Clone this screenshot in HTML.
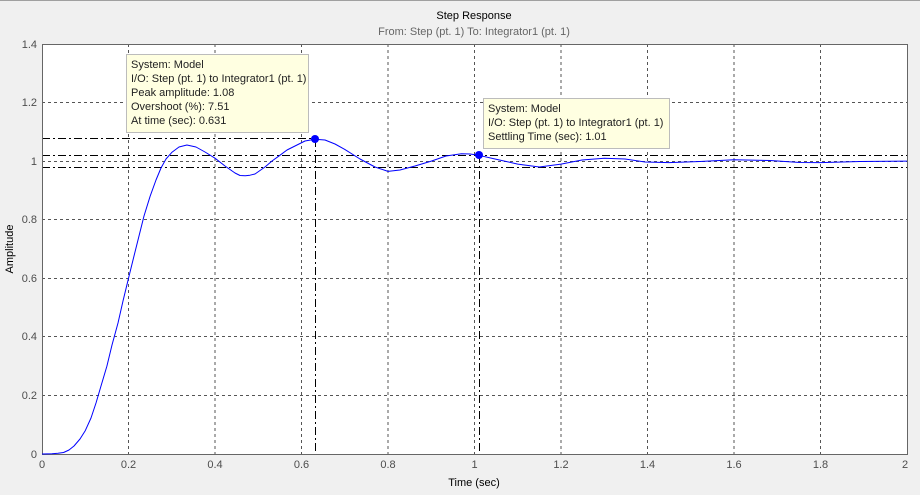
<!DOCTYPE html><html><head><style>body{margin:0;background:#f0f0f0;width:920px;height:495px;overflow:hidden;font-family:"Liberation Sans",sans-serif}
.tip{position:absolute;background:#ffffe1;border:1px solid #bcbcbc;font-size:11px;line-height:14px;padding:3px 4px;color:#222;white-space:nowrap}</style></head><body>
<svg width="920" height="495" style="position:absolute;left:0;top:0" font-family="Liberation Sans, sans-serif">
<line x1="0" y1="0.5" x2="920" y2="0.5" stroke="#a0a0a0"/>
<rect x="42" y="44" width="865" height="410" fill="#fff"/>
<g stroke="#555" stroke-width="1" stroke-dasharray="3,3">
<line x1="128.5" y1="44" x2="128.5" y2="454"/><line x1="215" y1="44" x2="215" y2="454"/><line x1="301.5" y1="44" x2="301.5" y2="454"/><line x1="388" y1="44" x2="388" y2="454"/><line x1="474.5" y1="44" x2="474.5" y2="454"/><line x1="561" y1="44" x2="561" y2="454"/><line x1="647.5" y1="44" x2="647.5" y2="454"/><line x1="734" y1="44" x2="734" y2="454"/><line x1="820.5" y1="44" x2="820.5" y2="454"/>
<line x1="42" y1="102.5" x2="907" y2="102.5"/><line x1="42" y1="161.5" x2="907" y2="161.5"/><line x1="42" y1="219.5" x2="907" y2="219.5"/><line x1="42" y1="278.5" x2="907" y2="278.5"/><line x1="42" y1="336.5" x2="907" y2="336.5"/><line x1="42" y1="395.5" x2="907" y2="395.5"/>
</g>
<g stroke="#000" stroke-width="1" stroke-dasharray="8,3,2,3">
<line x1="42" y1="138.5" x2="315" y2="138.5"/><line x1="315.5" y1="139" x2="315.5" y2="454"/>
<line x1="42" y1="155.5" x2="907" y2="155.5"/><line x1="42" y1="167.5" x2="907" y2="167.5"/><line x1="479.5" y1="155" x2="479.5" y2="454"/>
</g>
<rect x="42.5" y="44.5" width="865" height="410" fill="none" stroke="#666"/>
<polyline fill="none" stroke="#0000ff" stroke-width="1" stroke-linejoin="round" points="42,454 47,453.9 52,453.7 58,453.3 63.6,452.5 69,450 74,446 80,439 85.3,430.6 91,418 96,403 101,386 106.9,366.1 112,345 118,323 123,301 128.5,278.3 134,256 139,236 144,216 150.1,196.3 156,180 161,168 166,159 171.8,152.4 179,147 186.9,145 196,147 205,152 215,158.2 225,166 235,173 240,175.5 245.3,175.8 250,175.2 255,174 265,167 272,161 279.9,155.3 287,150 295,146 305,141 314.9,139.2 325,140 335,144 344.8,149.4 360,159 375,167 388,171.4 400,170 415,166 431.3,161.1 446,156 461.5,153.8 470,154 478.8,155.3 495,159 517.8,164.1 539.4,167 561,164.1 582,160 604.3,158.2 625,159 645,162 669.1,162.6 700,161.5 734,159.7 770,160.5 800,162.5 820.5,162.6 860,161.5 907,161.1"/>
<circle cx="315" cy="139" r="4" fill="#0000ff"/><circle cx="479" cy="155" r="4" fill="#0000ff"/>
<g font-size="11" fill="#4d4d4d" text-anchor="end">
<text x="37" y="48">1.4</text><text x="37" y="106">1.2</text><text x="37" y="165">1</text><text x="37" y="223">0.8</text><text x="37" y="282">0.6</text><text x="37" y="340">0.4</text><text x="37" y="399">0.2</text><text x="37" y="458">0</text></g>
<g font-size="11" fill="#4d4d4d" text-anchor="middle">
<text x="42" y="468">0</text><text x="128.5" y="468">0.2</text><text x="215" y="468">0.4</text><text x="301.5" y="468">0.6</text><text x="388" y="468">0.8</text><text x="474.5" y="468">1</text><text x="561" y="468">1.2</text><text x="647.5" y="468">1.4</text><text x="734" y="468">1.6</text><text x="820.5" y="468">1.8</text><text x="905" y="468">2</text></g>
<text x="474" y="19" font-size="11" text-anchor="middle" fill="#000">Step Response</text>
<text x="474" y="35" font-size="11" text-anchor="middle" fill="#666">From: Step (pt. 1)  To: Integrator1 (pt. 1)</text>
<text x="474" y="486" font-size="11" text-anchor="middle" fill="#000">Time (sec)</text>
<text transform="translate(13,249) rotate(-90)" font-size="11" text-anchor="middle" fill="#000">Amplitude</text>
</svg>
<div class="tip" style="left:126px;top:54px;width:173px;height:71px">System: Model<br>I/O: Step (pt. 1) to Integrator1 (pt. 1)<br>Peak amplitude: 1.08<br>Overshoot (%): 7.51<br>At time (sec): 0.631</div>
<div class="tip" style="left:483px;top:98px;width:177px;height:43px">System: Model<br>I/O: Step (pt. 1) to Integrator1 (pt. 1)<br>Settling Time (sec): 1.01</div>
</body></html>
